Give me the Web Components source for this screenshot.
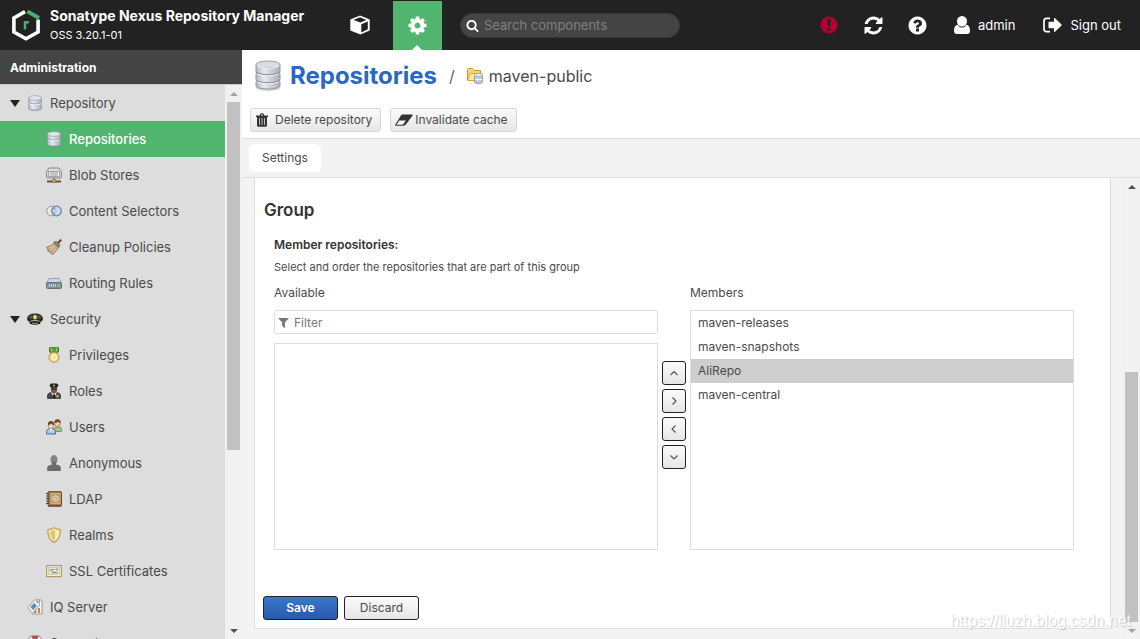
<!DOCTYPE html>
<html lang="en">
<head>
<meta charset="utf-8">
<title>Repositories - Sonatype Nexus Repository Manager</title>
<style>
html,body{margin:0;height:100%}
body{font-family:Inter,"Liberation Sans",sans-serif;font-size:12px;font-weight:400;color:#4a4a4a;overflow:hidden;background:#fff}
</style>
</head>
<body>
<nx-app></nx-app>
<script>
const define = (name, html, setup) => {
  const t = document.createElement('template');
  t.innerHTML = '<style>*{box-sizing:border-box}</style>' + html;
  customElements.define(name, class extends HTMLElement {
    connectedCallback() {
      if (this.shadowRoot) return;
      this.attachShadow({mode: 'open'}).append(t.content.cloneNode(true));
      if (setup) setup(this, this.shadowRoot);
    }
  });
};

const DISKS = `<defs><linearGradient id="m"><stop offset="0" stop-color="#b3b9c2"/><stop offset=".35" stop-color="#e6eaf0"/><stop offset="1" stop-color="#a9afb9"/></linearGradient></defs>`;
const ICONS = {
  cog: ['0 0 1792 1792', `<path fill="currentColor" d="M1152 896q0-106-75-181t-181-75-181 75-75 181 75 181 181 75 181-75 75-181zm512-109v222q0 12-8 23t-20 13l-185 28q-19 54-39 91 35 50 107 138 10 12 10 25t-9 23q-27 37-99 108t-94 71q-12 0-26-9l-138-108q-44 23-91 38-16 136-29 186-7 28-36 28h-222q-14 0-24.5-8.5t-11.5-21.5l-28-184q-49-16-90-37l-141 107q-10 9-25 9-14 0-25-11-126-114-165-168-7-10-7-23 0-12 8-23 15-21 51-66.5t54-70.5q-27-50-41-99l-183-27q-13-2-21-12.5t-8-23.5v-222q0-12 8-23t19-13l186-28q14-46 39-92-40-57-107-138-10-12-10-24 0-10 9-23 26-36 98.5-107.5t94.5-71.5q13 0 26 10l138 107q44-23 91-38 16-136 29-186 7-28 36-28h222q14 0 24.5 8.5t11.5 21.5l28 184q49 16 90 37l142-107q9-9 24-9 13 0 25 10 129 119 165 170 7 8 7 22 0 12-8 23-15 21-51 66.5t-54 70.5q26 50 41 98l183 28q13 2 21 12.5t8 23.5z"/>`],
  refresh: ['0 0 1792 1792', `<path fill="currentColor" d="M1639 1056q0 5-1 7-64 268-268 434.5t-478 166.5q-146 0-282.5-55t-243.5-157l-129 129q-19 19-45 19t-45-19-19-45v-448q0-26 19-45t45-19h448q26 0 45 19t19 45-19 45l-137 137q71 66 161 102t187 36q134 0 250-65t186-179q11-17 53-117 8-23 30-23h192q13 0 22.5 9.5t9.5 22.5zm25-800v448q0 26-19 45t-45 19h-448q-26 0-45-19t-19-45 19-45l138-138q-148-137-349-137-134 0-250 65t-186 179q-11 17-53 117-8 23-30 23h-199q-13 0-22.5-9.5t-9.5-22.5v-7q65-268 270-434.5t480-166.5q146 0 284 55.5t245 156.5l130-129q19-19 45-19t45 19 19 45z"/>`],
  search: ['0 0 1792 1792', `<path fill="currentColor" d="M1216 832q0-185-131.5-316.5t-316.5-131.5-316.5 131.5-131.5 316.5 131.5 316.5 316.5 131.5 316.5-131.5 131.5-316.5zm512 832q0 52-38 90t-90 38q-54 0-90-38l-343-342q-179 124-399 124-143 0-273.5-55.5t-225-150-150-225-55.5-273.5 55.5-273.5 150-225 225-150 273.5-55.5 273.5 55.5 225 150 150 225 55.5 273.5q0 220-124 399l343 343q37 37 37 90z"/>`],
  help: ['0 0 1792 1792', `<path fill="currentColor" d="M1024 1376v-192q0-14-9-23t-23-9h-192q-14 0-23 9t-9 23v192q0 14 9 23t23 9h192q14 0 23-9t9-23zm256-672q0-88-55.5-163t-138.5-116-170-41q-243 0-371 213-15 24 8 42l132 100q7 6 19 6 16 0 25-12 53-68 86-92 34-24 86-24 48 0 85.5 26t37.5 59q0 38-20 61t-68 45q-63 28-115.5 86.5t-52.5 125.5v36q0 14 9 23t23 9h192q14 0 23-9t9-23q0-19 21.5-49.5t54.5-49.5q32-18 49-28.5t46-35 44.5-48 28-60.5 12.5-81zm384 192q0 209-103 385.5t-279.5 279.5-385.5 103-385.5-103-279.5-279.5-103-385.5 103-385.5 279.5-279.5 385.5-103 385.5 103 279.5 279.5 103 385.5z"/>`],
  filter: ['128 128 1536 1536', `<path fill="currentColor" d="M1595 295q17 41-14 70l-493 493v742q0 42-39 59-13 5-25 5-27 0-45-19l-256-256q-19-19-19-45v-486l-493-493q-31-29-14-70 17-39 59-39h1280q42 0 59 39z"/>`],
  alert: ['0 0 18 18', `<circle cx="9" cy="9" r="8.6" fill="#b5002f"/><path fill="#222" d="M7.3 3.2h3.4l-.4 7.2H7.7zM7.5 11.9h3v2.8h-3z"/>`],
  user: ['0 0 16 18', `<path fill="currentColor" d="M8 0a5 5 0 0 1 5 5.2c0 2.900-2 5.300-5 5.300S3 8.100 3 5.200A5 5 0 0 1 8 0zM3.600 8.700C4.700 10.700 6.200 11.500 8 11.500s3.300-.8 4.400-2.800C15 8.900 16 12 16 15c0 2-1.200 3-2.900 3H2.900C1.200 18 0 17 0 15c0-3 1-6.100 3.600-6.300z"/>`],
  signout: ['0 0 19 16', `<path fill="none" stroke="currentColor" stroke-width="1.700" d="M7 1.400H3.500Q1 1.400 1 4v8q0 2.600 2.500 2.600H7"/><path fill="currentColor" d="M5.500 5.500q0-.8.8-.8H11V1.800q0-1.300 1-.5l6.300 6q.7.700 0 1.400l-6.300 6q-1 .8-1-.5v-2.900H6.300q-.8 0-.8-.8z"/>`],
  cube: ['0 0 20 20', `<path fill="currentColor" d="M10 .4l9.700 4v11L10.400 19.500.3 15.400v-11z"/><path fill="#222" d="M10 2.300l6.400 2.600L10.300 7.400 3.600 4.900zM11.300 9.300l6.500-2.800v7.800l-6.500 3.200z"/>`],
  logo: ['0 0 28 32', `<path fill="none" stroke="#fff" stroke-width="3.600" d="M13 2.600L1.900 9v14L14 29.800 26.100 23V10.500"/><path fill="none" stroke="#4caf6e" stroke-width="3.800" d="M15.400 2.300L27 9"/><path fill="none" stroke="#4caf6e" stroke-width="2.400" d="M13 20.500V12M13 15.500q.8-2.600 4-2.300"/>`],
  trash: ['0 0 12 14', `<path fill="#333" d="M0 2.600h3.600L4.300.9Q4.600.2 5.300.2h1.400q.7 0 1 .7l.7 1.700H12V4h-1v8.400q0 1.400-1.400 1.400H2.400Q1 13.800 1 12.400V4H0zM4.800 2.600h2.400l-.5-1.100H5.300z"/><path stroke="#ddd" stroke-width=".8" d="M3.500 5v7M6 5v7M8.500 5v7"/>`],
  eraser: ['0 0 18 12', `<path fill="#333" d="M7.600.4h9.600q1 .1.400 1L11.300 10q-1.300 1.700-3 1.700H1Q-.4 11.600.5 10.200L6.100 1.300Q6.700.4 7.600.4z"/><path fill="#f4f4f4" d="M4.300 6.600h6.600l-2.500 3.400q-.5.700-1.300.7H1.500z"/>`],
  disks: ['0 0 16 16', DISKS + `<path fill="#777d88" opacity=".5" d="M1.500 12q6.500 3 13 0v2.500q-6.500 3-13 0z"/><path fill="url(#m)" stroke="#9299a4" stroke-width=".7" d="M1.500 3v4q0 1.500 1 1.700-1 .3-1 1.300v3.500q1 1.500 6.500 1.500t6.500-1.500V10q0-1-1-1.300 1-.2 1-1.700V3z"/><ellipse cx="8" cy="3" rx="6.500" ry="2.300" fill="#e2e6ec" stroke="#9aa1ab" stroke-width=".7"/><path fill="none" stroke="#fff" d="M2.200 8.700q5.800 2.300 11.600 0"/><path fill="none" stroke="#858c97" stroke-width=".7" d="M2 7.900q6 2.300 12 0"/>`],
  bigdisks: ['0 0 26 32', DISKS + `<ellipse cx="13" cy="27.500" rx="12.500" ry="3.500" fill="#bbb" opacity=".6"/><path fill="url(#m)" stroke="#8e96a1" d="M1 4.500V11q0 1.500.8 2-.8.500-.8 1.500V19q0 1.500.8 2-.8.500-.8 1.500V26q2 3 12 3t12-3v-3.500q0-1-.8-1.500.8-.5.800-2v-4.500q0-1-.8-1.500.8-.5.800-2V4.500z"/><ellipse cx="13" cy="4.500" rx="12" ry="3.500" fill="#d7dde5" stroke="#9aa1ab"/><path fill="none" stroke="#fff" d="M2 13.700q11 4.300 22 0M2 21.700q11 4.300 22 0M2 6q11 4.800 22 0"/><path fill="none" stroke="#7f8793" d="M1.700 12.700q11.300 4.300 22.600 0M1.700 20.700q11.300 4.300 22.600 0"/>`],
  folder: ['0 0 16 16', `<path fill="#f7d67a" stroke="#c9962f" d="M.5 12.500v-11q0-1 1-1h4l1.500 2h6.500v10z"/><path fill="#fbeaa6" stroke="#d8a93e" d="M.7 12.500l2.300-7h12l-1 7z"/><path fill="#bfcbd8" stroke="#8490a0" stroke-width=".8" d="M7.500 7v7q0 1.500 4 1.500t4-1.500V7z"/><ellipse cx="11.500" cy="7" rx="4" ry="1.500" fill="#eef3f8" stroke="#8f9bab" stroke-width=".7"/><path fill="none" stroke="#fff" d="M8 11.200q3.500 1.300 7 0"/>`],
  blob: ['0 0 16 16', `<path fill="#ddd" stroke="#858585" d="M.6 4.500L3 1h10l2.400 3.500V10q0 1-1 1H1.600q-1 0-1-1z"/><rect x="2.500" y="4.500" width="11" height="5" fill="#f5f5f5" stroke="#929292" stroke-width=".8"/><path stroke="#999" d="M4 6h8M4 8h8"/><path stroke="#555" stroke-width="2" d="M1 14.500h14"/><path stroke="#777" stroke-width="1.500" d="M8 11v2"/><path fill="#f0b740" stroke="#99661c" stroke-width=".7" d="M6.500 12.800h3v2.400h-3z"/>`],
  selectors: ['0 0 16 16', `<circle cx="5.500" cy="8" r="4.800" fill="#e7e7e7" stroke="#999"/><circle cx="10.500" cy="8" r="4.800" fill="#c8dcf0" fill-opacity=".8" stroke="#5e7fa8" stroke-width="1.200"/><path d="M8 4q-2.500 4 0 8 2.500-4 0-8z" fill="#fff" stroke="#7590b2" stroke-width=".8"/>`],
  broom: ['0 0 16 16', `<path stroke="#70452e" stroke-width="2.200" d="M11 5l4.300-4.300"/><path fill="#bca781" stroke="#8a734d" stroke-width=".8" d="M8 3.500l4.800 5L7 15.500 4.500 14 4 12.500 2 12.300 1.700 10 .3 8.500 6 6z"/><path stroke="#eadcb8" d="M3 9l4.500-2.500M4.500 11.500l4-4M7 13.500l3-4"/><path fill="#888" stroke="#5f5e5b" stroke-width=".8" d="M8 3.300l2.200-1.100 3.800 4-1.300 2z"/>`],
  router: ['0 0 16 16', `<path fill="#c6dbe8" stroke="#8195a3" stroke-width=".8" d="M.7 8L3 3.500h10L15.300 8z"/><rect x=".5" y="7.500" width="15" height="6" rx="1" fill="#7f929e" stroke="#65717a"/><path stroke="#e7eef2" stroke-dasharray="1 1" stroke-width="2" d="M3 10.500h7"/><path stroke="#91d85a" stroke-width="2" d="M12 10.500h2"/>`],
  cap: ['0 0 16 16', `<path fill="#2a2a2c" d="M0 7.500Q1 2.500 8 2.500t8 5Q16 10 13 11H3Q0 10 0 7.500z"/><path fill="#56565a" d="M1.500 7Q3 4 6 4L5 8zM14.500 7Q13 4 10 4l1 4z"/><path fill="#151515" d="M3 10q5-2 10 0l.5 2.500q-5.500 2.500-11 0z"/><path fill="none" stroke="#cfc39a" d="M3.500 10.200q4.500-1.400 9 0"/><path fill="#ecd76f" d="M8 3.500l2 1.800-.5 3h-3l-.5-3z"/><path stroke="#fff" opacity=".6" d="M5 12.300h6"/>`],
  medal: ['0 0 16 16', `<path fill="#63a23b" stroke="#3f7b27" d="M3.500.7h9v4l-2.500 2h-4l-2.500-2z"/><path stroke="#a5cf85" d="M5.500 1v3M10.500 1v3"/><circle cx="8" cy="10.300" r="5" fill="#efd486" stroke="#b99457"/><circle cx="8" cy="10.300" r="2.800" fill="#f3e6a0" stroke="#fff7d6"/>`],
  officer: ['0 0 16 16', `<path fill="#46484d" stroke="#292b30" stroke-width=".7" d="M1.500 15.500v-3q0-2.500 3.500-3h6q3.500.5 3.500 3v3z"/><path fill="#fff" d="M5 9.500h6l-3 5z"/><path fill="#222" d="M7.500 10.500h1l.8 4-1.300 1-1.300-1z"/><ellipse cx="8" cy="6.500" rx="3.100" ry="4" fill="#76594b"/><path fill="#222" d="M3.500 2.200L5 .5h6l1.500 1.700-1.200 2.400H4.700z"/><path fill="#222" d="M5 5.500h6v1H5z"/><circle cx="8" cy="2.500" r="1" fill="#d8bd4e"/><path fill="#e4c14c" d="M10.500 12h2v2.500h-2z"/>`],
  users: ['0 0 16 16', `<path fill="#a9c188" stroke="#6e8b4d" stroke-width=".8" d="M8 12.500V10q0-1.800 2.500-2h3q2 .2 2 2v2.500z"/><ellipse cx="11.500" cy="4.500" rx="2.700" ry="3.200" fill="#f0cfa9" stroke="#8d6039" stroke-width=".7"/><path fill="#6b4627" d="M8.500 4Q8 .2 11.500.2T14.600 4q-1.600.2-2.600-1.500Q11 4 8.500 4z"/><path fill="#adcaec" stroke="#436fa6" d="M.5 15v-2.500Q.5 10.300 3 10h4q2.500.3 2.500 2.500V15z"/><ellipse cx="5" cy="6.500" rx="2.700" ry="3.300" fill="#f3d7b3" stroke="#9b7149" stroke-width=".7"/><path fill="#704725" d="M2 6.200Q1.500 2 5 2t3 4q-2 0-3-1.500Q4 6 2 6.200z"/><path fill="#fff" d="M3.500 10h3L5 12.500z"/>`],
  anon: ['0 0 16 16', `<ellipse cx="8" cy="4.800" rx="3" ry="4.300" fill="#858585" stroke="#6c6c6c" stroke-width=".6"/><path fill="#6c6c6c" d="M6 7h4v2.500q4.500.7 4.800 3V15H1.200v-2.500q.3-2.300 4.800-3z"/><path stroke="#505050" d="M1.200 15.300h13.600"/>`],
  book: ['0 0 16 16', `<rect x="2" y=".7" width="13.500" height="14" rx=".7" fill="#a17d4f" stroke="#6d4c28"/><rect x="5" y="2.500" width="9" height="10" fill="#b8976a" stroke="#d8c199" stroke-width=".8"/><circle cx="9.500" cy="7.500" r="2.700" fill="none" stroke="#f4ead6"/><circle cx="9.500" cy="7.500" r="1" fill="#f4ead6"/><path stroke="#444" stroke-width="1.200" d="M0 2.500h3M0 5h3M0 7.500h3M0 10h3M0 12.500h3"/><path stroke="#5d3f1e" d="M2 15.200h13.500"/>`],
  shield: ['0 0 16 16', `<path fill="#f6e9aa" stroke="#b9954c" stroke-width="1.100" d="M2 2.500Q5.500 2.500 8 .6q2.500 1.900 6 1.900 1 9-6 13-7-4-6-13z"/><path fill="#e2ca7c" d="M8 3v10q-4.500-3-4-8.500Q6 4.300 8 3z"/><path stroke="#c9ae66" d="M8 3v10"/><path fill="none" stroke="#fff8d9" d="M9 3.500q1.500.8 3.200 1 .3 5-3.200 7.500"/>`],
  cert: ['0 0 16 16', `<rect x=".6" y="2.600" width="14.800" height="11" fill="#f7f3df" stroke="#b59a6a" stroke-width="1.200"/><rect x="2.500" y="4.500" width="11" height="7" fill="#eee8cc" stroke="#b8b9a0" stroke-width=".7"/><path stroke="#858a8a" stroke-width=".8" d="M4 6.500h5M4 8h3"/><path fill="none" stroke="#4569aa" d="M6 10.200q2-2 3-.5 1.500-.7 3 .5"/><circle cx="11" cy="6.500" r="1.200" fill="#86a8c8"/>`],
  tags: ['0 0 16 16', `<path fill="#f7f7f7" stroke="#9a9a9a" d="M9 1h5q1 0 1 1v13H5.500z"/><path fill="#eee" stroke="#a2a2a2" d="M.7 8.700L7.500 1h5v5.500l-7 8z"/><path fill="#5f8fbb" stroke="#3b6b98" stroke-width=".6" d="M3.800 8L7 4.500l2.500 2.300-3.200 3.700z"/><circle cx="10.500" cy="3" r=".9" fill="#777"/><path fill="#7dac42" d="M7 12.500l2.500-3v4.500H7z"/><path fill="#d97b38" d="M11 9h2v5h-2z"/>`],
  lifebuoy: ['0 0 16 16', `<rect x=".8" y=".8" width="14.400" height="14.400" rx="5" fill="#ece8e8" stroke="#888"/><path fill="#bd4a50" d="M4.500 1h7l-1.500 4h-4zM4.500 15h7l-1.500-4h-4z"/><circle cx="8" cy="8" r="3.200" fill="#ddd" stroke="#888"/>`],
  tri: ['0 0 10 7', `<path fill="#222" d="M0 0h10L5 7z"/>`],
  up: ['0 0 8 8', `<path fill="none" stroke="#555" stroke-width="1.200" d="M.5 6L4 2.500 7.500 6"/>`],
  right: ['0 0 8 8', `<path fill="none" stroke="#555" stroke-width="1.200" d="M2.500.5L6 4 2.500 7.500"/>`],
  left: ['0 0 8 8', `<path fill="none" stroke="#555" stroke-width="1.200" d="M5.500.5L2 4l3.500 3.500"/>`],
  down: ['0 0 8 8', `<path fill="none" stroke="#555" stroke-width="1.200" d="M.5 2.500L4 6l3.500-3.500"/>`]
};

define('nx-icon', `<style>:host{display:block;flex:none;width:16px;height:16px}svg{display:block;width:100%;height:100%}</style>`, (el, root) => {
  const [box, art] = ICONS[el.getAttribute('name')];
  root.innerHTML += `<svg viewBox="${box}" aria-hidden="true">${art}</svg>`;
});

define('nx-scrollbar', `<style>
:host{display:flex;flex-direction:column;flex:none;width:17px;background:#f1f1f1}
i{flex:none;height:17px;display:grid;place-items:center}
i::before{content:"";border:4px solid transparent;border-top-width:0;border-bottom-color:var(--up,#505050)}
i:last-child::before{border-top:4px solid var(--down,#505050);border-bottom:0}
.a{flex:var(--before,0) 0 0}.t{flex:var(--thumb,1) 0 0;margin:0 2px;background:#c1c1c1}.b{flex:var(--after,0) 0 0}
</style><i></i><div class="a"></div><div class="t"></div><div class="b"></div><i></i>`);

define('nx-header', `<style>
:host{display:flex;align-items:center;height:50px;flex:none;background:#222;color:#fff;font-size:13px}
.brand{display:flex;align-items:center;gap:10px;width:335px;padding-left:12px}
.brand nx-icon{width:28px;height:32px}
.brand b{display:block;font-size:14px;line-height:20px;font-weight:700}
.brand span{display:block;font-size:11px;line-height:18px}
button{background:none;border:0;padding:0;color:inherit;font:inherit;display:flex;align-items:center;justify-content:center;gap:8px}
.mode{width:49px;height:49px;align-self:flex-start}
.mode nx-icon{width:20px;height:20px}
.on{background:#52b56f;margin-left:9px;position:relative;align-self:flex-end}
.on nx-icon{width:21px;height:21px}
.on::after{content:"";position:absolute;bottom:0;left:19px;border:5px solid transparent;border-top:0;border-bottom-color:#fff}
label{display:flex;align-items:center;gap:5px;width:220px;height:25px;margin-left:18px;padding:0 5px;border:1px solid #383838;border-radius:13px;background:#444}
label nx-icon{width:13px;height:13px}
input{flex:1;min-width:0;border:0;background:none;outline:0;padding:0;font:13px Inter,sans-serif;color:#fff}
input::placeholder{color:#808080}
nav{display:flex;align-items:center;margin-left:auto;padding-right:19px;gap:28px}
.tools{display:flex;gap:23px;margin-right:-2px}
.tools nx-icon{width:21px;height:21px}
.tools .al{width:18px;height:18px;margin:2px}
.u{width:16px;height:18px}.s{width:19px;height:16px}
</style>
<div class="brand"><nx-icon name="logo"></nx-icon><div><b>Sonatype Nexus Repository Manager</b><span>OSS 3.20.1-01</span></div></div>
<button class="mode" aria-label="Browse"><nx-icon name="cube"></nx-icon></button>
<button class="mode on" aria-label="Administration"><nx-icon name="cog"></nx-icon></button>
<label><nx-icon name="search"></nx-icon><input type="text" placeholder="Search components" aria-label="Search components"></label>
<nav><div class="tools"><button aria-label="System status"><nx-icon class="al" name="alert"></nx-icon></button><button aria-label="Refresh"><nx-icon name="refresh"></nx-icon></button><button aria-label="Help"><nx-icon name="help"></nx-icon></button></div>
<button><nx-icon class="u" name="user"></nx-icon>admin</button><button><nx-icon class="s" name="signout"></nx-icon>Sign out</button></nav>`);

define('nx-tree-item', `<style>
:host{display:block}
a{display:flex;align-items:center;height:36px;gap:7px;padding-left:46px;font-size:13px;color:inherit;text-decoration:none}
:host([level="1"]) a{padding-left:27px}
:host([open]) a{padding-left:10px}
:host([selected]) a{background:#52b56f;color:#fff;font-weight:500}
.tri{display:none;width:10px;height:7px}
:host([open]) .tri{display:block}
</style><a href="#"><nx-icon class="tri" name="tri"></nx-icon><slot name="icon"></slot><slot></slot></a>`);

define('nx-sidebar', `<style>
:host{display:flex;flex-direction:column;flex:none;width:242px;min-height:0;background:#ddd}
h2{margin:0;flex:none;height:35px;padding-left:10px;font-size:12px;line-height:35px;font-weight:700;color:#fff;background:#444;border-bottom:1px solid #ccc}
div{flex:1;display:flex;min-height:0}
nav{flex:1;overflow:hidden}
nx-scrollbar{--up:#a3a3a3;--thumb:348;--after:172}
</style><h2>Administration</h2><div><nav></nav><nx-scrollbar></nx-scrollbar></div>`, (el, root) => {
  const rows = [
    ['Repository','disks','level="1" open'],['Repositories','disks','selected'],['Blob Stores','blob'],['Content Selectors','selectors'],['Cleanup Policies','broom'],['Routing Rules','router'],
    ['Security','cap','level="1" open'],['Privileges','medal'],['Roles','officer'],['Users','users'],['Anonymous','anon'],['LDAP','book'],['Realms','shield'],['SSL Certificates','cert'],
    ['IQ Server','tags','level="1"'],['Support','lifebuoy','level="1"']];
  root.querySelector('nav').innerHTML = rows.map(([text, icon, attrs = '']) =>
    `<nx-tree-item ${attrs}><nx-icon slot="icon" name="${icon}"></nx-icon>${text}</nx-tree-item>`).join('');
});

define('nx-button', `<style>
:host{display:block;flex:none}
button{display:flex;align-items:center;justify-content:center;gap:4px;width:100%;height:24px;padding:0 8px 1px 4px;border:1px solid #d8d8d8;border-radius:3px;background:linear-gradient(#fbfbfb,#e6e6e6);font:inherit;font-size:12px;color:inherit}
:host([kind]) button{padding:0 0 1px;border-color:#222}
:host([kind="primary"]) button{background:linear-gradient(#3a78cc,#265aac);color:#fff;font-weight:600}
</style><button type="button"><slot></slot></button>`);

define('nx-feature-header', `<style>
:host{display:block;flex:none;background:#fff;border-bottom:1px solid #ddd;padding:8px 8px 6px}
.crumb{display:flex;align-items:center;height:36px;padding-left:5px}
.big{width:26px;height:32px;margin-right:9px}
h1{margin:0;font-size:24px;line-height:36px;font-weight:700}
h1 a{color:#2a68c4;text-decoration:none}
.sep{font-size:16px;margin:0 12px;color:#666}
.name{font-size:16px;margin-left:6px}
.bar{display:flex;gap:9px;margin-top:14px}
.tr{width:14px;height:14px;margin-right:2px}.er{width:18px;height:12px;margin-right:-2px}
</style>
<div class="crumb"><nx-icon class="big" name="bigdisks"></nx-icon><h1><a href="#">Repositories</a></h1><span class="sep">/</span><nx-icon name="folder"></nx-icon><span class="name">maven-public</span></div>
<div class="bar"><nx-button><nx-icon class="tr" name="trash"></nx-icon>Delete repository</nx-button><nx-button><nx-icon class="er" name="eraser"></nx-icon>Invalidate cache</nx-button></div>`);

define('nx-tabs', `<style>
:host{display:flex;flex:none;height:39px;align-items:center;padding-left:7px;background:#f3f3f3;border-bottom:1px solid #ddd}
button{height:28px;padding:0 13px 1px;border:0;border-radius:6px;background:#fff;font:inherit;font-size:12px;color:inherit}
</style><button role="tab" aria-selected="true"><slot></slot></button>`);

define('nx-item-selector', `<style>
:host{display:flex;font-size:12px}
.col{flex:1;min-width:0;display:flex;flex-direction:column}
label{line-height:16px;margin-bottom:9px}
.filter{display:flex;align-items:center;gap:5px;height:24px;margin-bottom:9px;padding:0 3px;border:1px solid #ddd;border-radius:3px}
.filter nx-icon{width:11px;height:11px;color:#777}
input{flex:1;min-width:0;border:0;outline:0;padding:0;background:none;font:inherit}
input::placeholder{color:#777}
select{width:100%;height:207px;border:1px solid #ddd;border-radius:0;padding:0;outline:0;overflow:hidden;background:#fff;font:inherit;color:inherit}
.members{height:240px}
option{height:24px;min-height:24px;line-height:16px;padding:4px 7px;color:#4a4a4a}
option:checked{background:#cecece linear-gradient(#cecece,#cecece);color:#4a4a4a}
.moves{flex:none;width:32px;padding:0 4px 5px;display:flex;flex-direction:column;justify-content:center;gap:4px}
.moves nx-icon{width:8px;height:8px}
</style>
<div class="col"><label for="av">Available</label><div class="filter"><nx-icon name="filter"></nx-icon><input type="text" placeholder="Filter" aria-label="Filter"></div><select id="av" multiple></select></div>
<div class="moves"><nx-button kind="plain"><nx-icon name="up"></nx-icon></nx-button><nx-button kind="plain"><nx-icon name="right"></nx-icon></nx-button><nx-button kind="plain"><nx-icon name="left"></nx-icon></nx-button><nx-button kind="plain"><nx-icon name="down"></nx-icon></nx-button></div>
<div class="col"><label for="me">Members</label><select id="me" class="members" multiple><option>maven-releases</option><option>maven-snapshots</option><option selected>AliRepo</option><option>maven-central</option></select></div>`);

define('nx-settings', `<style>
:host{flex:1;display:flex;min-height:0;background:#f3f3f3}
.scroll{flex:1;min-width:0;overflow:hidden;padding:0 12px 10px}
form{background:#fff;border:1px solid #ddd;border-top:0;padding:22px 36px 8px 19px}
h3{margin:0 0 17px -10px;font-size:17px;line-height:20px;font-weight:600;color:#333}
h4{margin:0 0 6px;font-size:12px;line-height:16px;font-weight:600;color:#333}
p{margin:0 0 10px;font-size:11px;line-height:16px}
.actions{display:flex;gap:6px;margin:46px 0 0 -11px}
.actions nx-button{width:75px}
nx-scrollbar{--down:#a3a3a3;--before:177;--thumb:250}
</style>
<div class="scroll"><form><h3>Group</h3><h4>Member repositories:</h4><p>Select and order the repositories that are part of this group</p><nx-item-selector></nx-item-selector>
<div class="actions"><nx-button kind="primary">Save</nx-button><nx-button kind="plain">Discard</nx-button></div></form></div><nx-scrollbar></nx-scrollbar>`);

define('nx-app', `<style>
:host{display:flex;flex-direction:column;height:100vh;position:relative}
.body{flex:1;display:flex;min-height:0}
main{flex:1;min-width:0;display:flex;flex-direction:column}
.mark{position:absolute;right:9px;bottom:8px;font:16px/20px "Liberation Sans",sans-serif;color:#fff;opacity:.8;text-shadow:1px 1px 1px #bbb;pointer-events:none}
</style>
<nx-header></nx-header><div class="body"><nx-sidebar></nx-sidebar><main><nx-feature-header></nx-feature-header><nx-tabs>Settings</nx-tabs><nx-settings></nx-settings></main></div><span class="mark">https://liuzh.blog.csdn.net</span>`);
</script>
</body>
</html>
